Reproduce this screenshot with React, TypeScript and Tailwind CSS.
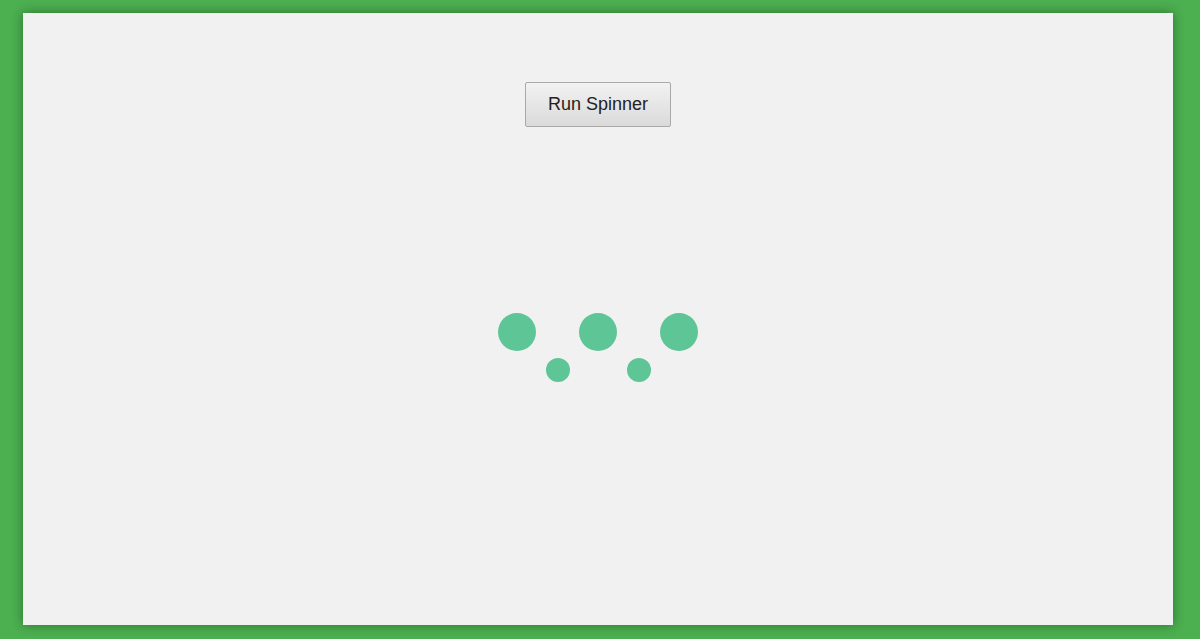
export default function App() {
  const dots = [
    { big: true },
    { big: false },
    { big: true },
    { big: false },
    { big: true },
  ];

  return (
    <div className="h-[639px] w-full bg-[#4caf50] pt-[13px] pl-[23px] pr-[27px] pb-[14px]">
      <div className="h-full w-full bg-[#f1f1f1] shadow-[0_0_10px_rgba(0,40,0,0.45)] flex flex-col items-center pt-[69px]">
        <button
          className="h-[45px] w-[146px] rounded-[2px] border border-[#a9a9a9] bg-gradient-to-b from-[#f2f2f2] to-[#dadada] text-[18px] text-[#222] font-['Liberation_Sans',Arial,sans-serif]"
        >
          Run Spinner
        </button>

        {/* Spinner */}
        <div className="mt-[186px] grid grid-cols-[repeat(5,40.5px)]">
          {dots.map((d, i) => (
            <div key={i} className="flex justify-center">
              {d.big ? (
                <div className="h-[38px] w-[38px] rounded-full bg-[#5dc596]" />
              ) : (
                <div className="mt-[45px] h-[24px] w-[24px] rounded-full bg-[#5dc596]" />
              )}
            </div>
          ))}
        </div>
      </div>
    </div>
  );
}
